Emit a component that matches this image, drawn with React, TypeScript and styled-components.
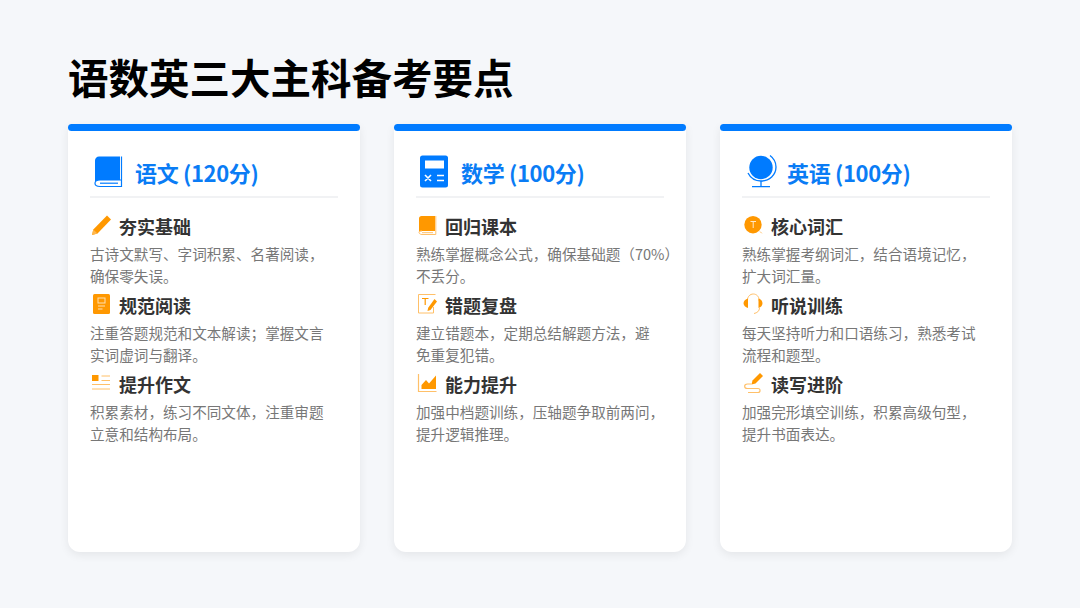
import styled, { createGlobalStyle } from 'styled-components';
import type { ReactNode } from 'react';

const GlobalStyle = createGlobalStyle`
  html, body {
    margin: 0;
    padding: 0;
    background: #f5f7fa;
    font-family: "Noto Sans CJK SC", "Noto Sans", sans-serif;
  }
`;

const Page = styled.div`
  width: 1080px;
  height: 608px;
  box-sizing: border-box;
  padding: 50px 68px 56px;
  display: flex;
  flex-direction: column;
  overflow: hidden;
`;

const Title = styled.h1`
  margin: 0 0 20px;
  height: 54px;
  font-size: 40.5px;
  line-height: 54px;
  font-weight: 700;
  color: #000;
`;

const Columns = styled.div`
  flex: 1;
  display: grid;
  grid-template-columns: repeat(3, 292px);
  column-gap: 34px;
`;

const Card = styled.section`
  background: #fff;
  border-radius: 4px 4px 12px 12px;
  box-shadow: 0 3px 10px rgba(0, 0, 0, 0.07);
`;

const TopBar = styled.div`
  height: 7px;
  background: #007bff;
  border-radius: 4px;
`;

const CardBody = styled.div`
  padding: 20px 22px 0;
`;

const CardHead = styled.div`
  display: flex;
  align-items: center;
  gap: 10px;
  height: 45px;
  border-bottom: 2px solid #f1f2f4;
  margin-bottom: 14px;
`;

const HeadIcon = styled.svg`
  width: 32px;
  height: 36px;
  flex: none;
  margin-left: 3px;
  margin-top: -4px;
`;

const CardTitle = styled.h2`
  margin: -3px 0 0;
  font-size: 22px;
  line-height: 34px;
  font-weight: 700;
  letter-spacing: -0.35px;
  color: #0a7cf5;
  white-space: nowrap;
`;

const Item = styled.div`
  height: 79px;
`;

const ItemHead = styled.div`
  display: flex;
  align-items: center;
  gap: 8px;
  height: 28px;
  margin-bottom: 3px;
`;

const ItemIcon = styled.svg`
  width: 20px;
  height: 24px;
  flex: none;
  margin-left: 1px;
  margin-top: -4px;
`;

const ItemTitle = styled.h3`
  margin: 0;
  font-size: 18px;
  line-height: 28px;
  font-weight: 700;
  color: #333;
  white-space: nowrap;
`;

const DescLine = styled.p`
  margin: 0;
  font-size: 14.6px;
  line-height: 22px;
  font-weight: 400;
  color: #777;
  white-space: nowrap;
`;

const BLUE = '#007bff';
const ORANGE = '#ff9800';
const LIGHT = '#ffc069';

const BookLarge = () => (
  <HeadIcon viewBox="0 0 32 36">
    <path d="M6 2.500h21v23.500H7c-2 0-3.800.6-5 1.700V6.500C2 4.300 3.800 2.500 6 2.500z" fill={BLUE} />
    <path d="M28.500 2.500v30H7c-2.800 0-5-1.300-5-3.200S4.200 26 7 26h21" fill="none" stroke={BLUE} strokeWidth="1.200" />
    <path d="M7 29.200h18" stroke={BLUE} strokeWidth="1.200" />
  </HeadIcon>
);

const CalcLarge = () => (
  <HeadIcon viewBox="0 0 32 36">
    <rect x="1" y="1.500" width="28" height="32" rx="2.500" fill={BLUE} />
    <rect x="6" y="6.500" width="19" height="8" fill="#fff" />
    <path d="M6 21l6 6M12 21l-6 6M18 21.500h7M18 26.500h7" stroke="#fff" strokeWidth="1.600" />
  </HeadIcon>
);

const GlobeLarge = () => (
  <HeadIcon viewBox="0 0 32 36">
    <circle cx="16" cy="13.500" r="11.700" fill={BLUE} />
    <path d="M25 1.500c3.800 2.800 6 7 6 11.500 0 7.800-6.500 14-15 14-5.500 0-10.500-3-13-8" fill="none" stroke={BLUE} strokeWidth="1.300" />
    <path d="M16 27v5.500M7 32.700h18" stroke={BLUE} strokeWidth="1.300" />
  </HeadIcon>
);

const icons: Record<string, ReactNode> = {
  pencil: (
    <>
      <path d="M16 3.500l4 4L6.500 21.500 1 23l1.300-5.500z" fill={ORANGE} />
      <path d="M1 23l1.300-5.500 4.200 4z" fill="#ffb74d" />
    </>
  ),
  page: (
    <>
      <rect x="2" y="3" width="17" height="20" rx="1.500" fill={ORANGE} />
      <rect x="7" y="7" width="7" height="5" fill="none" stroke="#ffe0b2" strokeWidth="1" />
      <path d="M7 15h7M7 18h4.500" stroke="#ffe0b2" strokeWidth="1" />
    </>
  ),
  news: (
    <>
      <rect x="1" y="5" width="6.500" height="6" fill={ORANGE} />
      <path d="M10.500 6h8.500M10.500 10.500h8.500M1 14.500h18M1 19h18" stroke={LIGHT} strokeWidth="1" />
    </>
  ),
  book: (
    <>
      <path d="M4.500 4h13.500v15H5c-1.300 0-2.400.4-3 1V6.500C2 5 3 4 4.500 4z" fill={ORANGE} />
      <path d="M18.800 4v18.500H5C3.300 22.500 2 21.500 2 20.300S3.300 19 5 19" fill="none" stroke={LIGHT} strokeWidth="1" />
      <path d="M5 20.700h11" stroke={LIGHT} strokeWidth="1" />
    </>
  ),
  note: (
    <>
      <path d="M18.500 3.500H1.500v18.500h15v-6" fill="none" stroke={LIGHT} strokeWidth="1" />
      <path d="M5 7.500h6.500M8.200 7.500v6.500" stroke={ORANGE} strokeWidth="1.200" />
      <path d="M17.500 8l2.500 2.500-6.500 8.500-3 1 .7-3.200z" fill={ORANGE} />
    </>
  ),
  chart: (
    <>
      <path d="M1.500 4v17.500h18" fill="none" stroke={LIGHT} strokeWidth="1.200" />
      <path d="M4.500 19v-4l4.500-5 3 3.500 7-8V19z" fill={ORANGE} />
    </>
  ),
  target: (
    <>
      <circle cx="10" cy="12.700" r="8.700" fill={ORANGE} />
      <path d="M7.500 9.500h5.500M10.200 9.500v6.500" stroke="#ffe8c8" strokeWidth="1" />
      <path d="M17 19.500l1.800 1.800" stroke={LIGHT} strokeWidth="1" />
    </>
  ),
  headset: (
    <>
      <path d="M4.500 10V9c0-3.300 2.500-6 5.800-6s5.800 2.700 5.800 6v1" fill="none" stroke={LIGHT} strokeWidth="1" />
      <path d="M5 7.500v9.500C2.500 16 .5 14.500.5 12.200S2.500 8.500 5 7.500zM15.500 7.500v9.500c2.500-1 4-2.500 4-4.800s-1.500-3.700-4-4.700z" fill={ORANGE} />
      <path d="M16.500 17c0 3-2.500 5-5.500 5.500" fill="none" stroke={LIGHT} strokeWidth="1" />
    </>
  ),
  write: (
    <>
      <path d="M17 3l3 3-7.500 7.500-4 1 1-4z" fill={ORANGE} />
      <path d="M8.500 14H4.500c-3.800 0-3.800 4.500 0 4.500h10.500c2.700 0 2.700 4 0 4H5" fill="none" stroke={LIGHT} strokeWidth="1.200" />
    </>
  ),
};

const columns = [
  {
    icon: <BookLarge />,
    title: '语文 (120分)',
    items: [
      { icon: 'pencil', title: '夯实基础', lines: ['古诗文默写、字词积累、名著阅读，', '确保零失误。'] },
      { icon: 'page', title: '规范阅读', lines: ['注重答题规范和文本解读；掌握文言', '实词虚词与翻译。'] },
      { icon: 'news', title: '提升作文', lines: ['积累素材，练习不同文体，注重审题', '立意和结构布局。'] },
    ],
  },
  {
    icon: <CalcLarge />,
    title: '数学 (100分)',
    items: [
      { icon: 'book', title: '回归课本', lines: ['熟练掌握概念公式，确保基础题（70%）', '不丢分。'] },
      { icon: 'note', title: '错题复盘', lines: ['建立错题本，定期总结解题方法，避', '免重复犯错。'] },
      { icon: 'chart', title: '能力提升', lines: ['加强中档题训练，压轴题争取前两问，', '提升逻辑推理。'] },
    ],
  },
  {
    icon: <GlobeLarge />,
    title: '英语 (100分)',
    items: [
      { icon: 'target', title: '核心词汇', lines: ['熟练掌握考纲词汇，结合语境记忆，', '扩大词汇量。'] },
      { icon: 'headset', title: '听说训练', lines: ['每天坚持听力和口语练习，熟悉考试', '流程和题型。'] },
      { icon: 'write', title: '读写进阶', lines: ['加强完形填空训练，积累高级句型，', '提升书面表达。'] },
    ],
  },
];

export default function App() {
  return (
    <>
      <GlobalStyle />
      <Page>
        <Title>语数英三大主科备考要点</Title>
        <Columns>
          {columns.map((col) => (
            <Card key={col.title}>
              <TopBar />
              <CardBody>
                <CardHead>
                  {col.icon}
                  <CardTitle>{col.title}</CardTitle>
                </CardHead>
                {col.items.map((item) => (
                  <Item key={item.title}>
                    <ItemHead>
                      <ItemIcon viewBox="0 0 20 24">{icons[item.icon]}</ItemIcon>
                      <ItemTitle>{item.title}</ItemTitle>
                    </ItemHead>
                    {item.lines.map((line) => (
                      <DescLine key={line}>{line}</DescLine>
                    ))}
                  </Item>
                ))}
              </CardBody>
            </Card>
          ))}
        </Columns>
      </Page>
    </>
  );
}
